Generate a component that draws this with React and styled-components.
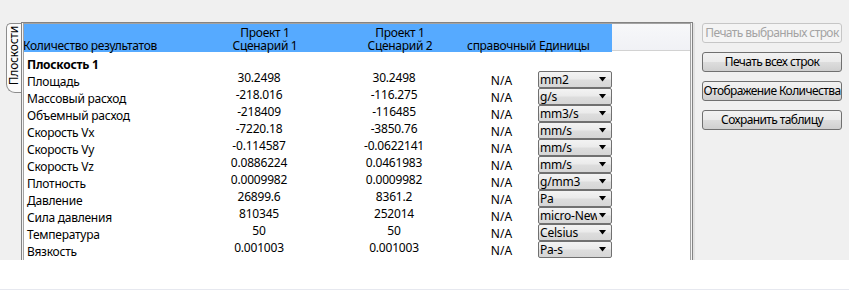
import React from "react";
import styled, { createGlobalStyle } from "styled-components";

const Global = createGlobalStyle`
  html, body { margin: 0; padding: 0; background: #ffffff; }
  body { font-family: "Noto Sans", "Open Sans", sans-serif; font-size: 12px; color: #000; }
`;

const Page = styled.div`
  width: 849px;
  height: 290px;
  display: flex;
  flex-direction: column;
  overflow: hidden;
`;

const Workspace = styled.div`
  height: 260px;
  background: #f0f0f0;
  display: flex;
  align-items: flex-start;
  padding: 22px 0 0 6px;
  box-sizing: border-box;
  overflow: hidden;
`;

const Footer = styled.div`
  height: 30px;
  background: #ffffff;
  border-bottom: 1px solid #e6e8ef;
  box-sizing: border-box;
`;

const Tab = styled.div`
  margin-top: 1px;
  width: 14px;
  height: 68px;
  background: #fbfbfb;
  border: 1px solid #8c8c8c;
  border-right: none;
  border-radius: 5px 0 0 9px;
  display: flex;
  align-items: center;
  justify-content: center;
`;

const TabLabel = styled.span`
  writing-mode: vertical-rl;
  transform: rotate(180deg);
  font-size: 12px;
  line-height: 14px;
  letter-spacing: -0.2px;
  margin-top: -4px;
`;

const Frame = styled.div`
  width: 672px;
  height: 240px;
  box-sizing: border-box;
  border: 1px solid #838383;
  border-bottom: none;
  padding: 1px 1px 0 1px;
  background: #f3f3f3;
  box-shadow: 3px 0 0 -1px #e2e2e2;
`;

const Inner = styled.div`
  height: 100%;
  box-sizing: border-box;
  border: 1px solid #a3a3a3;
  border-bottom: none;
  background: #ffffff;
  margin: -1px 0 0 0;
  overflow: hidden;
`;

const cols = "172px 140px 130px 73px 74px";

const HeaderBar = styled.div`
  display: flex;
  height: 28px;
  margin-left: -1px;
`;

const HeaderGrid = styled.div`
  display: grid;
  grid-template-columns: ${cols};
  background: #56aaff;
  height: 28px;
  box-sizing: border-box;
  padding-top: 1px;
`;

const HeaderFiller = styled.div`
  flex: 1;
  height: 26px;
  background: linear-gradient(#f7f8fa, #f0f1f5);
  border-bottom: 1px solid #d2d2d2;
`;

const HeadCell = styled.div`
  display: flex;
  flex-direction: column;
  justify-content: flex-end;
  align-items: ${(p) => p.$align || "center"};
  line-height: 13px;
  white-space: nowrap;
  padding-left: ${(p) => p.$pl || 0}px;
  letter-spacing: -0.3px;
`;

const HeadLine = styled.span`
  display: block;
  height: 13px;
  overflow: visible;
`;

const Body = styled.div`
  padding-top: 2px;
`;

const Row = styled.div`
  display: grid;
  grid-template-columns: ${cols};
  height: 17px;
  margin-left: -1px;
`;

const Label = styled.div`
  padding-left: 4px;
  line-height: 17px;
  padding-top: 2px;
  box-sizing: border-box;
  font-weight: ${(p) => (p.$bold ? 700 : 400)};
  white-space: nowrap;
  letter-spacing: -0.25px;
`;

const Value = styled.div`
  text-align: center;
  padding-right: 12px;
  line-height: 14px;
  letter-spacing: -0.2px;
`;

const NA = styled.div`
  text-align: center;
  line-height: 17px;
  padding-top: 1px;
  box-sizing: border-box;
`;

const Select = styled.div`
  height: 17px;
  box-sizing: border-box;
  border: 1px solid #707070;
  border-radius: 2px;
  background: linear-gradient(#f3f3f3 0%, #ebebeb 45%, #dddddd 55%, #d6d6d6 100%);
  display: flex;
  align-items: center;
  justify-content: space-between;
  padding: 0 4px 0 1px;
  overflow: hidden;
`;

const SelectText = styled.span`
  line-height: 15px;
  white-space: nowrap;
  overflow: hidden;
  flex: 1;
  letter-spacing: -0.2px;
`;

const Arrow = () => (
  <svg width="8" height="5" viewBox="0 0 8 5" style={{ flex: "none", marginLeft: 2 }}>
    <path d="M0 0 H7 L3.5 4.5 Z" fill="#000" />
  </svg>
);

const Buttons = styled.div`
  margin-left: 9px;
  margin-top: 1px;
  display: flex;
  flex-direction: column;
  gap: 9px;
`;

const Button = styled.div`
  width: 140px;
  height: 20px;
  box-sizing: border-box;
  border: 1px solid ${(p) => (p.$disabled ? "#c6c6c6" : "#707070")};
  border-radius: 3px;
  background: ${(p) =>
    p.$disabled
      ? "#f4f4f4"
      : "linear-gradient(#f2f2f2 0%, #ebebeb 48%, #dddddd 52%, #cfcfcf 100%)"};
  color: ${(p) => (p.$disabled ? "#a3a3a3" : "#000")};
  display: flex;
  align-items: center;
  justify-content: safe center;
  white-space: nowrap;
  overflow: hidden;
  letter-spacing: -0.6px;
  line-height: 16px;
`;

const rows = [
  ["Площадь", "30.2498", "30.2498", "mm2"],
  ["Массовый расход", "-218.016", "-116.275", "g/s"],
  ["Объемный расход", "-218409", "-116485", "mm3/s"],
  ["Скорость Vx", "-7220.18", "-3850.76", "mm/s"],
  ["Скорость Vy", "-0.114587", "-0.0622141", "mm/s"],
  ["Скорость Vz", "0.0886224", "0.0461983", "mm/s"],
  ["Плотность", "0.0009982", "0.0009982", "g/mm3"],
  ["Давление", "26899.6", "8361.2", "Pa"],
  ["Сила давления", "810345", "252014", "micro-Newton"],
  ["Температура", "50", "50", "Celsius"],
  ["Вязкость", "0.001003", "0.001003", "Pa-s"],
];

export default function App() {
  return (
    <Page>
      <Global />
      <Workspace>
        <Tab>
          <TabLabel>Плоскости</TabLabel>
        </Tab>
        <Frame>
          <Inner>
            <HeaderBar>
              <HeaderGrid>
                <HeadCell $align="flex-start">Количество результатов</HeadCell>
                <HeadCell>
                  <HeadLine>Проект 1</HeadLine>
                  <HeadLine>Сценарий 1</HeadLine>
                </HeadCell>
                <HeadCell>
                  <HeadLine>Проект 1</HeadLine>
                  <HeadLine>Сценарий 2</HeadLine>
                </HeadCell>
                <HeadCell>справочный</HeadCell>
                <HeadCell $align="flex-start" $pl={1}>
                  Единицы
                </HeadCell>
              </HeaderGrid>
              <HeaderFiller />
            </HeaderBar>
            <Body>
              <Row>
                <Label $bold>Плоскость 1</Label>
              </Row>
              {rows.map(([name, a, b, unit]) => (
                <Row key={name}>
                  <Label>{name}</Label>
                  <Value>{a}</Value>
                  <Value>{b}</Value>
                  <NA>N/A</NA>
                  <Select>
                    <SelectText>{unit}</SelectText>
                    <Arrow />
                  </Select>
                </Row>
              ))}
            </Body>
          </Inner>
        </Frame>
        <Buttons>
          <Button $disabled>Печать выбранных строк</Button>
          <Button>Печать всех строк</Button>
          <Button>Отображение Количества</Button>
          <Button>Сохранить таблицу</Button>
        </Buttons>
      </Workspace>
      <Footer />
    </Page>
  );
}
